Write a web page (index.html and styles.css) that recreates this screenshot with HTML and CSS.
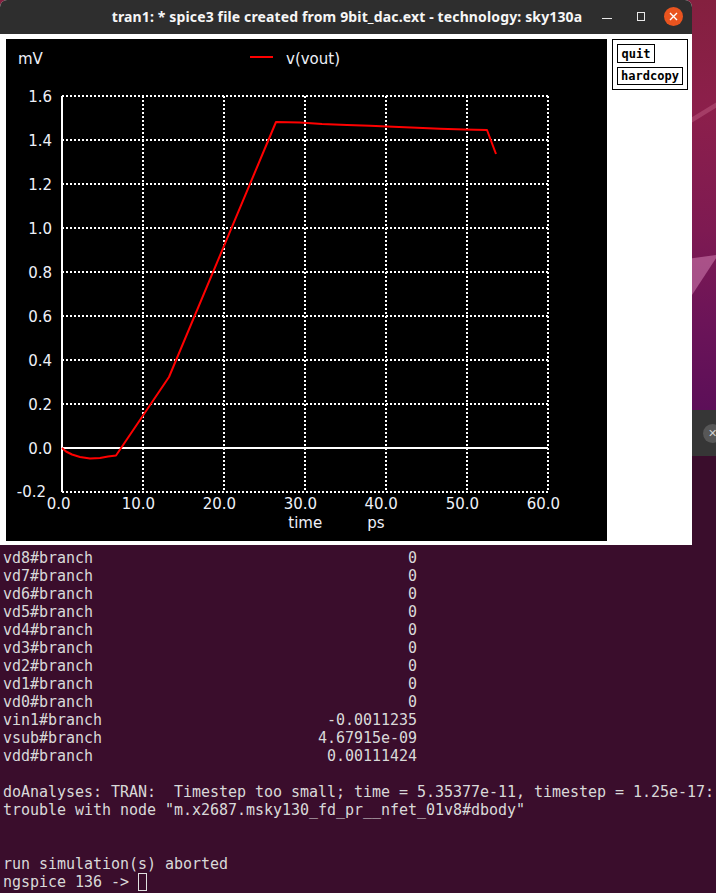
FILE: index.html
```html
<!DOCTYPE html>
<html lang="en">
<head>
<meta charset="utf-8">
<title>ngspice plot</title>
<link rel="stylesheet" href="styles.css">
</head>
<body>
<div class="desktop">
  <div class="terminal">
    <div class="term-header"><span class="tab-close">&#x2715;</span></div>
    <div class="term-body">
<pre class="term-text">vd8#branch                                   0
vd7#branch                                   0
vd6#branch                                   0
vd5#branch                                   0
vd4#branch                                   0
vd3#branch                                   0
vd2#branch                                   0
vd1#branch                                   0
vd0#branch                                   0
vin1#branch                         -0.0011235
vsub#branch                        4.67915e-09
vdd#branch                          0.00111424

doAnalyses: TRAN:  Timestep too small; time = 5.35377e-11, timestep = 1.25e-17:
trouble with node "m.x2687.msky130_fd_pr__nfet_01v8#dbody"


run simulation(s) aborted
ngspice 136 -&gt; <span class="cursor"></span></pre>
    </div>
  </div>

  <div class="plotwin">
    <div class="titlebar">
      <span class="title">tran1: * spice3 file created from 9bit_dac.ext - technology: sky130a</span>
      <div class="controls">
        <span class="ctl-min"></span>
        <span class="ctl-max"></span>
        <span class="ctl-close">
          <svg width="9" height="9" viewBox="0 0 9 9"><path d="M1 1L8 8M8 1L1 8" stroke="#fff" stroke-width="1.4" fill="none"/></svg>
        </span>
      </div>
    </div>
    <div class="client">
      <svg class="plot" width="601" height="502" viewBox="6 39 601 502">
        <g class="grid-dot">
          <line x1="62" y1="96" x2="548" y2="96"/>
          <line x1="62" y1="140" x2="548" y2="140"/>
          <line x1="62" y1="184" x2="548" y2="184"/>
          <line x1="62" y1="228" x2="548" y2="228"/>
          <line x1="62" y1="272" x2="548" y2="272"/>
          <line x1="62" y1="316" x2="548" y2="316"/>
          <line x1="62" y1="360" x2="548" y2="360"/>
          <line x1="62" y1="404" x2="548" y2="404"/>
          <line x1="62" y1="492" x2="548" y2="492"/>
          <line x1="143" y1="96" x2="143" y2="492"/>
          <line x1="224" y1="96" x2="224" y2="492"/>
          <line x1="305" y1="96" x2="305" y2="492"/>
          <line x1="386" y1="96" x2="386" y2="492"/>
          <line x1="467" y1="96" x2="467" y2="492"/>
          <line x1="548" y1="96" x2="548" y2="492"/>
        </g>
        <g class="grid-solid">
          <line x1="62" y1="96" x2="62" y2="492"/>
          <line x1="62" y1="448" x2="548" y2="448"/>
        </g>
        <polyline class="trace" points="62,448 66,451.5 72,454.5 80,457 90,458.5 100,458 108,456.5 116,455.5 169,377 276,122 300,122.5 322,124 347,125 370,125.7 393,126.7 417,127.7 440,128.7 464,129.5 487,130 496,154"/>
        <g class="lbl">
          <text x="18" y="64">mV</text>
          <text x="286" y="63.5">v(vout)</text>
          <g class="ylbl">
            <text x="52" y="101.5">1.6</text>
            <text x="52" y="145.5">1.4</text>
            <text x="52" y="189.5">1.2</text>
            <text x="52" y="233.5">1.0</text>
            <text x="52" y="277.5">0.8</text>
            <text x="52" y="321.5">0.6</text>
            <text x="52" y="365.5">0.4</text>
            <text x="52" y="409.5">0.2</text>
            <text x="52" y="453.5">0.0</text>
            <text x="46" y="497">-0.2</text>
          </g>
          <text x="46.7" y="509">0.0</text>
          <text x="121.7" y="509">10.0</text>
          <text x="202.7" y="509">20.0</text>
          <text x="283.7" y="509">30.0</text>
          <text x="364.5" y="509">40.0</text>
          <text x="445.7" y="509">50.0</text>
          <text x="526.7" y="509">60.0</text>
          <text x="288.3" y="528">time</text>
          <text x="367.3" y="528">ps</text>
        </g>
        <line class="legend-line" x1="250" y1="57" x2="273" y2="57"/>
      </svg>
      <div class="btnpanel">
        <button class="btn btn-quit">quit</button>
        <button class="btn btn-hard">hardcopy</button>
      </div>
    </div>
  </div>
</div>
</body>
</html>
```
FILE: styles.css
```css
html, body {
  margin: 0;
  padding: 0;
}
body {
  width: 716px;
  height: 893px;
  overflow: hidden;
}
.desktop {
  position: relative;
  width: 716px;
  height: 893px;
  overflow: hidden;
  background: linear-gradient(180deg, #84203f 0px, #8c1f4b 110px, #7e1a52 230px, #6c1458 320px, #5c0f58 410px, #4a0b50 893px);
}
.desktop::before {
  content: "";
  position: absolute;
  left: 680px;
  top: 100px;
  width: 40px;
  height: 30px;
  background: rgba(255, 170, 200, 0.22);
  clip-path: polygon(100% 0, 100% 18%, 0 100%, 0 82%);
}
.desktop::after {
  content: "";
  position: absolute;
  left: 692px;
  top: 255px;
  width: 24px;
  height: 40px;
  background: rgba(230, 150, 200, 0.45);
  clip-path: polygon(0 8%, 100% 0, 100% 8%, 0 100%);
}
.terminal {
  position: absolute;
  left: 0;
  top: 410px;
  width: 716px;
  height: 483px;
  display: flex;
  flex-direction: column;
  background: #3a0d2c;
  z-index: 1;
}
.term-header {
  position: relative;
  height: 46px;
  flex: none;
  background: #363636;
}
.tab-close {
  position: absolute;
  left: 703px;
  top: 14px;
  width: 19px;
  height: 19px;
  border-radius: 50%;
  background: #575757;
  color: #d0d0d0;
  font: 11px/19px "DejaVu Sans", sans-serif;
  text-align: center;
}
.term-body {
  flex: 1;
  display: flex;
  flex-direction: column;
  justify-content: flex-end;
  padding: 0 0 2px 3px;
}
.term-text {
  margin: 0;
  font: 15px/18px "DejaVu Sans Mono", monospace;
  letter-spacing: -0.03px;
  color: #d9d9d9;
  white-space: pre;
}
.cursor {
  display: inline-block;
  width: 9px;
  height: 18px;
  box-sizing: border-box;
  border: 1px solid #e0e0e0;
  vertical-align: top;
}
.plotwin {
  position: absolute;
  left: 0;
  top: 0;
  width: 692px;
  height: 545px;
  display: flex;
  flex-direction: column;
  background: #fff;
  border-radius: 7px 7px 0 0;
  overflow: hidden;
  z-index: 2;
}
.titlebar {
  position: relative;
  height: 34px;
  flex: none;
  background: #2e2e2e;
  display: flex;
  align-items: center;
  justify-content: center;
}
.title {
  color: #f6f6f6;
  font: bold 14px "Noto Sans", sans-serif;
  letter-spacing: 0.14px;
  margin-top: -1px;
  margin-left: 2px;
}
.controls {
  position: absolute;
  right: 9px;
  top: 0;
  height: 33px;
  display: flex;
  align-items: center;
}
.ctl-min {
  width: 10px;
  height: 1px;
  background: #e8e8e8;
  margin-top: 4px;
}
.ctl-max {
  width: 8px;
  height: 9px;
  box-sizing: border-box;
  border: 1px solid #e8e8e8;
  margin-left: 25px;
}
.ctl-close {
  width: 19px;
  height: 19px;
  border-radius: 50%;
  background: #e9541f;
  margin-left: 19px;
  display: flex;
  align-items: center;
  justify-content: center;
}
.ctl-close svg {
  display: block;
}
.client {
  flex: 1;
  display: flex;
  align-items: flex-start;
  gap: 5px;
  padding: 5px 4px 4px 6px;
}
.plot {
  display: block;
  flex: none;
  background: #000;
}
.grid-dot line {
  stroke: #fff;
  stroke-width: 2;
  stroke-dasharray: 2 2;
}
.grid-solid line {
  stroke: #fff;
  stroke-width: 2;
}
.trace {
  fill: none;
  stroke: #ff0000;
  stroke-width: 2;
  stroke-linejoin: round;
}
.legend-line {
  stroke: #ff0000;
  stroke-width: 2;
}
.lbl text {
  font-family: "DejaVu Sans", sans-serif;
  font-size: 15px;
  fill: #eef0f8;
}
.ylbl text {
  text-anchor: end;
}
.btnpanel {
  width: 76px;
  box-sizing: border-box;
  border: 1px solid #000;
  padding: 4px;
  display: flex;
  flex-direction: column;
  align-items: flex-start;
  gap: 4px;
}
.btn {
  box-sizing: border-box;
  margin: 0;
  padding: 0;
  border: 1px solid #000;
  border-radius: 0;
  background: #fff;
  color: #000;
  font: bold 12px "DejaVu Sans Mono", monospace;
  text-align: center;
}
.btn-quit {
  width: 38px;
  height: 19px;
}
.btn-hard {
  width: 66px;
  height: 18px;
}
```
